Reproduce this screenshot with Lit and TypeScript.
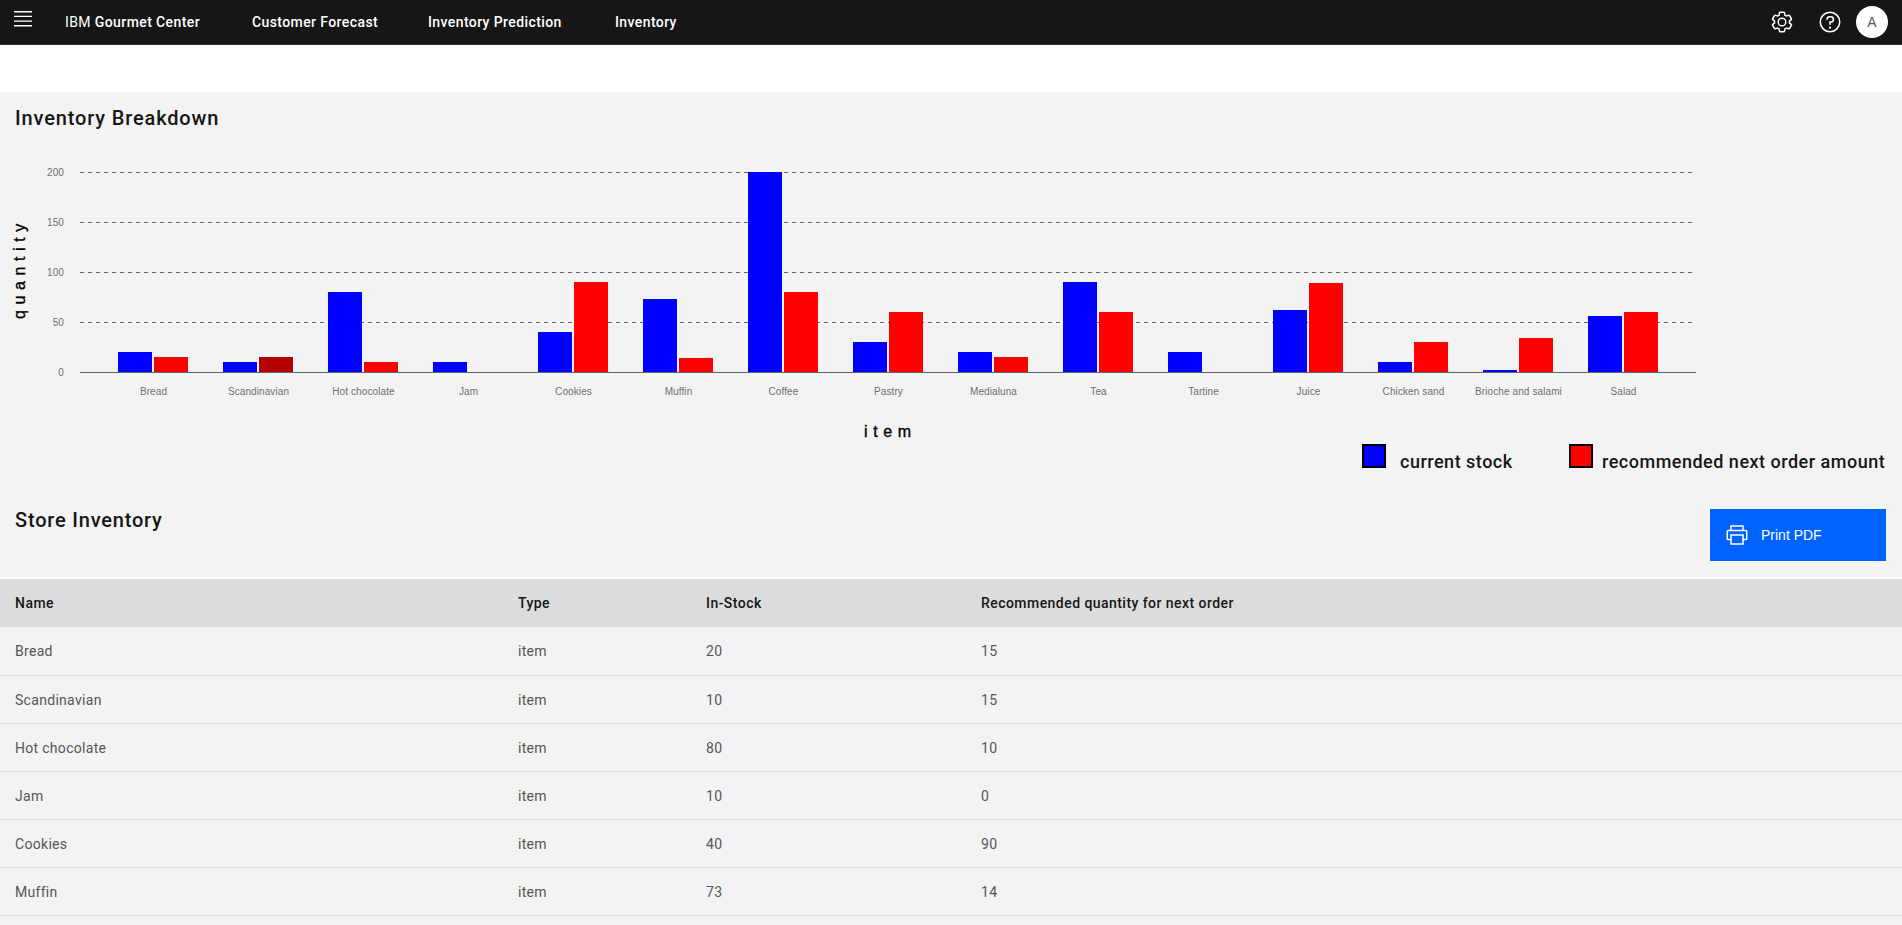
import { LitElement, html, css, svg } from 'lit';
import { customElement } from 'lit/decorators.js';

interface Item { name: string; stock: number; order: number; }

const ITEMS: Item[] = [
  { name: 'Bread', stock: 20, order: 15 },
  { name: 'Scandinavian', stock: 10, order: 15 },
  { name: 'Hot chocolate', stock: 80, order: 10 },
  { name: 'Jam', stock: 10, order: 0 },
  { name: 'Cookies', stock: 40, order: 90 },
  { name: 'Muffin', stock: 73, order: 14 },
  { name: 'Coffee', stock: 200, order: 80 },
  { name: 'Pastry', stock: 30, order: 60 },
  { name: 'Medialuna', stock: 20, order: 15 },
  { name: 'Tea', stock: 90, order: 60 },
  { name: 'Tartine', stock: 20, order: 0 },
  { name: 'Juice', stock: 62, order: 89 },
  { name: 'Chicken sand', stock: 10, order: 30 },
  { name: 'Brioche and salami', stock: 2, order: 34 },
  { name: 'Salad', stock: 56, order: 60 },
];

const BASE = 241;
const STEP = 105;
// only the rows that fit above the fold
const VISIBLE_ROWS = 6;

@customElement('app-root')
export class AppRoot extends LitElement {
  static styles = css`
    :host {
      display: block;
      height: 925px;
      overflow: hidden;
      background: #f3f3f3;
      font-family: Roboto, "Liberation Sans", sans-serif;
      color: #161616;
    }
    .header {
      display: flex;
      align-items: center;
      height: 44px;
      background: #161616;
      border-bottom: 1px solid #333;
      color: #fff;
      font-size: 14px;
      font-weight: 500;
      letter-spacing: 0.4px;
    }
    .menu { width: 18px; height: 16px; margin: 0 33px 6px 14px; }
    .brand { width: 187px; white-space: nowrap; }
    .brand span { font-weight: 400; }
    .nav { white-space: nowrap; }
    .nav-forecast { width: 176px; }
    .nav-prediction { width: 187px; }
    .spacer { flex: 1; }
    .actions { display: flex; align-items: center; gap: 24px; margin-right: 14px; }
    .actions svg { display: block; width: 24px; height: 24px; fill: #fff; }
    .avatar {
      display: flex;
      align-items: center;
      justify-content: center;
      width: 32px;
      height: 32px;
      margin-left: -10px;
      border-radius: 50%;
      background: #fff;
      color: #565656;
      font: 14px "Liberation Sans", sans-serif;
    }
    .white { height: 47px; background: #fff; }
    h2 {
      margin: 0;
      font-size: 20px;
      font-weight: 500;
      line-height: 26px;
      letter-spacing: 0.85px;
    }
    .title { padding: 13px 15px 0; }
    .chart { display: block; width: 1902px; height: 313px; }
    .legend {
      display: flex;
      height: 32px;
      font-size: 18px;
      font-weight: 500;
      letter-spacing: 0.5px;
    }
    .swatch { width: 20px; height: 20px; border: 2px solid #000; }
    .swatch-stock { background: #0000ff; }
    .swatch-order { background: #ff0000; }
    .legend-a { display: flex; margin-left: 1362px; width: 207px; }
    .legend-b { display: flex; }
    .legend span { margin-left: 14px; line-height: 36px; }
    .legend-b span { margin-left: 9px; }
    .bar {
      display: flex;
      justify-content: space-between;
      height: 68px;
      padding: 0 16px 0 15px;
      margin-top: 33px;
      border-bottom: 2px solid #fff;
    }
    .bar h2 { margin-top: -2px; letter-spacing: 0.8px; }
    .print {
      display: flex;
      align-items: center;
      gap: 12px;
      width: 176px;
      height: 52px;
      padding-left: 15px;
      box-sizing: border-box;
      border: none;
      background: #0062ff;
      color: #fff;
      font: 14px "Liberation Sans", sans-serif;
    }
    .print svg { width: 24px; height: 24px; fill: #fff; }
    table {
      width: 100%;
      border-collapse: collapse;
      table-layout: fixed;
      font-size: 14px;
      letter-spacing: 0.3px;
    }
    th {
      height: 48px;
      padding: 0 0 0 15px;
      background: #dcdcdc;
      text-align: left;
      font-weight: 500;
      color: #161616;
      letter-spacing: 0.45px;
    }
    td {
      height: 47px;
      padding: 0 0 0 15px;
      border-bottom: 1px solid #dcdcdc;
      color: #565656;
    }
    tbody tr:first-child td { height: 48px; }
    .c-name { width: 488px; }
    .c-type { width: 173px; }
    .c-stock { width: 260px; }
  `;

  private renderChart() {
    const grid = [50, 100, 150, 200];
    return svg`
      ${[0, ...grid].map((v) => svg`
        <text x="64" y=${BASE - v + 3.5} text-anchor="end" font-family="Liberation Sans" font-size="10" letter-spacing="0.1" fill="#6f6f6f">${v}</text>`)}
      ${grid.map((v) => svg`
        <line x1="80" x2="1692" y1=${BASE - v + 0.5} y2=${BASE - v + 0.5} stroke="#5a6872" stroke-dasharray="4 4"></line>`)}
      ${ITEMS.map((item, i) => {
        const x = 118 + i * STEP;
        return svg`
          <rect x=${x} y=${BASE - item.stock} width="34" height=${item.stock} fill="#0000ff"></rect>
          <rect x=${x + 36} y=${BASE - item.order} width="34" height=${item.order} fill=${item.name === 'Scandinavian' ? '#b30000' : '#ff0000'}></rect>
          <text x=${x + 35.5} y="264" text-anchor="middle" font-family="Liberation Sans" font-size="10" letter-spacing="0.1" fill="#6f6f6f">${item.name}</text>`;
      })}
      <line x1="80" x2="1696" y1=${BASE + 0.5} y2=${BASE + 0.5} stroke="#5a6872"></line>
      <text transform="translate(25 188) rotate(-90)" font-family="Liberation Sans" font-size="16" letter-spacing="5.6" fill="#000" stroke="#000" stroke-width="0.35">quantity</text>
      <text x="864" y="306" font-family="Liberation Sans" font-size="16" letter-spacing="5.6" fill="#000" stroke="#000" stroke-width="0.35">item</text>
    `;
  }

  render() {
    return html`
      <div class="header">
        <svg class="menu" viewBox="0 0 18 16"><path fill="#fff" d="M0 0h18v1.4H0zM0 4.7h18v1.4H0zM0 9.4h18v1.4H0zM0 14.1h18v1.4H0z"></path></svg>
        <div class="brand"><span>IBM</span> Gourmet Center</div>
        <div class="nav nav-forecast">Customer Forecast</div>
        <div class="nav nav-prediction">Inventory Prediction</div>
        <div class="nav">Inventory</div>
        <div class="spacer"></div>
        <div class="actions">
          <svg viewBox="0 0 32 32"><path d="M27,16.76c0-.25,0-.5,0-.76s0-.51,0-.77l1.92-1.68A2,2,0,0,0,29.3,11L26.94,7a2,2,0,0,0-1.73-1,2,2,0,0,0-.64.1l-2.43.82a11.35,11.35,0,0,0-1.31-.75l-.51-2.52a2,2,0,0,0-2-1.61H13.64a2,2,0,0,0-2,1.61l-.51,2.52a11.48,11.48,0,0,0-1.32.75L7.43,6.06A2,2,0,0,0,6.79,6,2,2,0,0,0,5.06,7L2.7,11a2,2,0,0,0,.41,2.51L5,15.24c0,.25,0,.5,0,.76s0,.51,0,.77L3.11,18.45A2,2,0,0,0,2.7,21L5.06,25a2,2,0,0,0,1.73,1,2,2,0,0,0,.64-.1l2.43-.82a11.35,11.35,0,0,0,1.31.75l.51,2.52a2,2,0,0,0,2,1.61h4.72a2,2,0,0,0,2-1.61l.51-2.52a11.48,11.48,0,0,0,1.32-.75l2.42.82a2,2,0,0,0,.64.1,2,2,0,0,0,1.73-1L29.3,21a2,2,0,0,0-.41-2.51ZM25.21,24l-3.43-1.16a8.86,8.86,0,0,1-2.71,1.57L18.36,28H13.64l-.71-3.55a9.36,9.36,0,0,1-2.7-1.57L6.79,24,4.43,20l2.72-2.4a8.9,8.9,0,0,1,0-3.13L4.43,12,6.79,8l3.43,1.16a8.86,8.86,0,0,1,2.71-1.57L13.64,4h4.72l.71,3.55a9.36,9.36,0,0,1,2.7,1.57L25.21,8,27.57,12l-2.72,2.4a8.9,8.9,0,0,1,0,3.13L27.57,20Z"></path><path d="M16,22a6,6,0,1,1,6-6A5.94,5.94,0,0,1,16,22Zm0-10a3.91,3.91,0,0,0-4,4,3.91,3.91,0,0,0,4,4,3.91,3.91,0,0,0,4-4A3.91,3.91,0,0,0,16,12Z"></path></svg>
          <svg viewBox="0 0 32 32"><path d="M16,2A14,14,0,1,0,30,16,14,14,0,0,0,16,2Zm0,26A12,12,0,1,1,28,16,12,12,0,0,1,16,28Z"></path><circle cx="16" cy="23.5" r="1.5"></circle><path d="M17,8H15.5A4.49,4.49,0,0,0,11,12.5V13h2v-.5A2.5,2.5,0,0,1,15.5,10H17a2.5,2.5,0,0,1,0,5H15v4.5h2V17a4.5,4.5,0,0,0,0-9Z"></path></svg>
          <div class="avatar">A</div>
        </div>
      </div>
      <div class="white"></div>
      <div class="title"><h2>Inventory Breakdown</h2></div>
      <svg class="chart" viewBox="0 0 1902 313">${this.renderChart()}</svg>
      <div class="legend">
        <div class="legend-a"><div class="swatch swatch-stock"></div><span>current stock</span></div>
        <div class="legend-b"><div class="swatch swatch-order"></div><span>recommended next order amount</span></div>
      </div>
      <div class="bar">
        <h2>Store Inventory</h2>
        <button class="print">
          <svg viewBox="0 0 32 32"><path d="M28,9H25V3H7V9H4a2,2,0,0,0-2,2V21a2,2,0,0,0,2,2H7v6H25V23h3a2,2,0,0,0,2-2V11A2,2,0,0,0,28,9ZM9,5H23V9H9ZM23,27H9V17H23Zm5-6H25V15H7v6H4V11H28Z"></path></svg>
          Print PDF
        </button>
      </div>
      <table>
        <thead>
          <tr>
            <th class="c-name">Name</th>
            <th class="c-type">Type</th>
            <th class="c-stock">In-Stock</th>
            <th>Recommended quantity for next order</th>
          </tr>
        </thead>
        <tbody>
          ${ITEMS.slice(0, VISIBLE_ROWS).map((item) => html`
            <tr>
              <td>${item.name}</td>
              <td>item</td>
              <td>${item.stock}</td>
              <td>${item.order}</td>
            </tr>`)}
        </tbody>
      </table>
    `;
  }
}
